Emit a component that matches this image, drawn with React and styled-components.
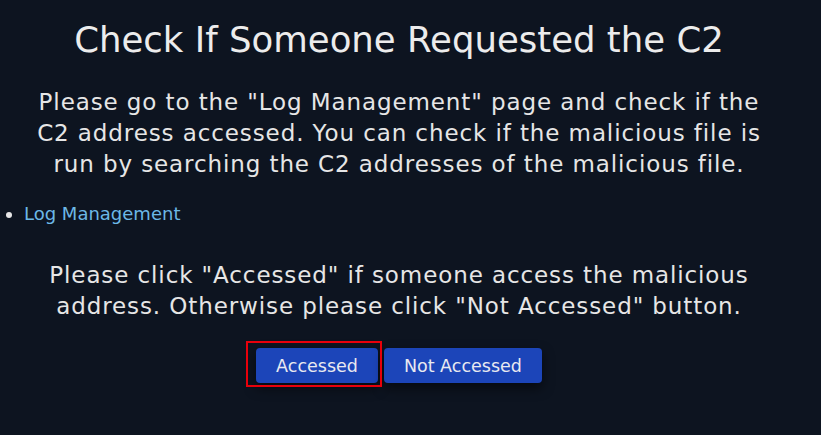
import React from "react";
import styled, { createGlobalStyle } from "styled-components";

const GlobalStyle = createGlobalStyle`
  html, body {
    margin: 0;
    background: #0d1420;
  }
  body {
    font-family: "DejaVu Sans", "Liberation Sans", sans-serif;
    color: #e8e8e8;
  }
`;

const Page = styled.div`
  width: 798px;
  min-height: 435px;
  display: flex;
  flex-direction: column;
  align-items: center;
  padding-top: 18px;
  box-sizing: border-box;
`;

const Title = styled.h1`
  margin: 0;
  font-size: 35.5px;
  font-weight: 400;
  line-height: 44px;
  color: #ececec;
  text-align: center;
`;

const Text = styled.p`
  margin: ${(p) => p.$top || 0}px 0 0;
  font-size: 23px;
  letter-spacing: 0.9px;
  line-height: 31px;
  text-align: center;
  color: #e6e6e6;
`;

const LinkList = styled.ul`
  align-self: stretch;
  margin: 22px 0 0;
  padding-left: 24px;
  font-size: 18px;
  line-height: 24px;
`;

const LinkItem = styled.li`
  color: #e6e6e6;
`;

const Link = styled.a`
  color: #6cb8e6;
  text-decoration: none;
`;

const Actions = styled.div`
  position: relative;
  display: flex;
  gap: 6px;
  margin-top: 26px;
`;

const Button = styled.button`
  height: 35px;
  padding: 0 20px;
  border: none;
  border-radius: 4px;
  background: #1c45b9;
  color: #e9e9f0;
  font-family: inherit;
  font-size: 17.5px;
  box-shadow: 0 5px 12px rgba(0, 0, 0, 0.55);
  cursor: pointer;
`;

const Highlight = styled.div`
  position: absolute;
  left: -10px;
  top: -7px;
  width: 136px;
  height: 46px;
  border: 2px solid #e8000b;
  box-sizing: border-box;
  pointer-events: none;
`;

export default function App() {
  return (
    <>
      <GlobalStyle />
      <Page>
        <Title>Check If Someone Requested the C2</Title>
        <Text $top={25}>
          Please go to the "Log Management" page and check if the
          <br />
          C2 address accessed. You can check if the malicious file is
          <br />
          run by searching the C2 addresses of the malicious file.
        </Text>
        <LinkList>
          <LinkItem>
            <Link href="#">Log Management</Link>
          </LinkItem>
        </LinkList>
        <Text $top={34}>
          Please click "Accessed" if someone access the malicious
          <br />
          address. Otherwise please click "Not Accessed" button.
        </Text>
        <Actions>
          <Highlight />
          <Button>Accessed</Button>
          <Button>Not Accessed</Button>
        </Actions>
      </Page>
    </>
  );
}
